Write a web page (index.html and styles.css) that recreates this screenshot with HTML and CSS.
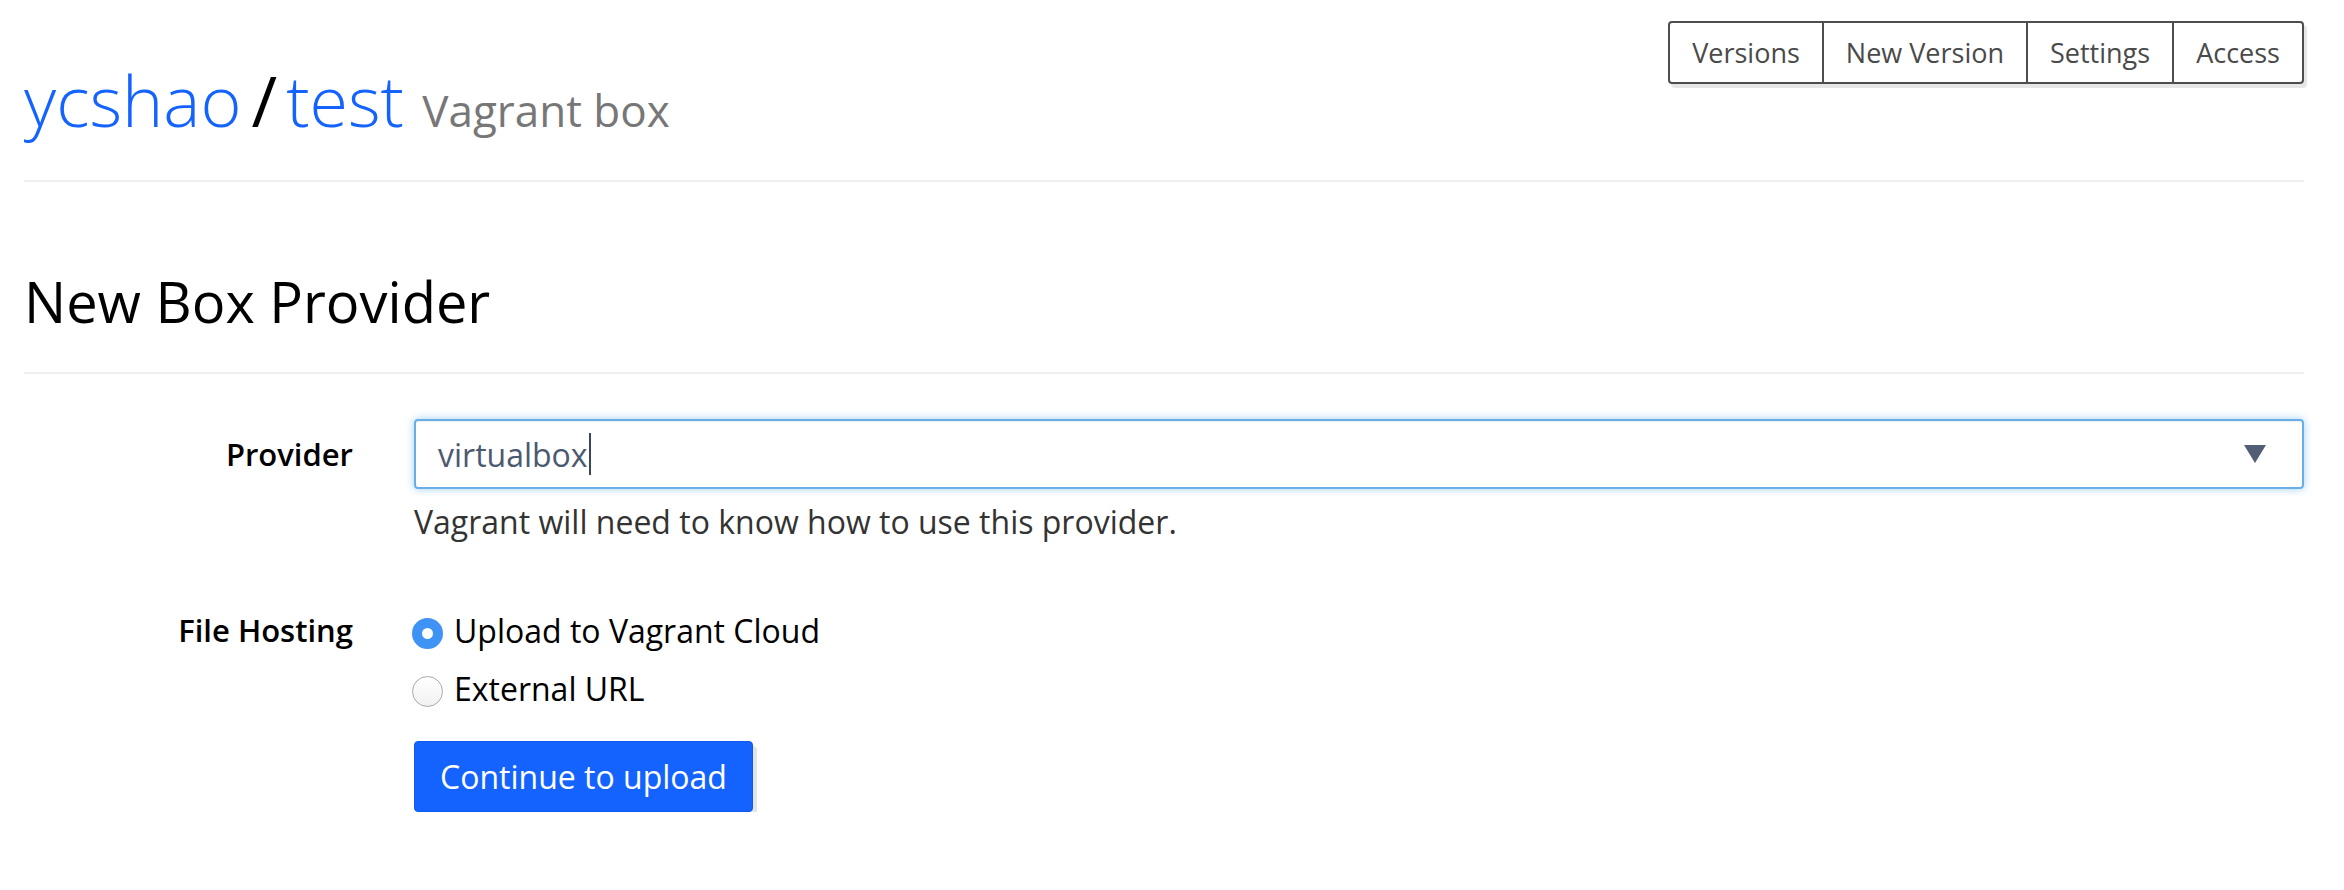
FILE: index.html
```html
<!DOCTYPE html>
<html lang="en">
<head>
<meta charset="utf-8">
<title>ycshao/test - New Box Provider</title>
<link rel="stylesheet" href="styles.css">
</head>
<body>
<div class="page">
  <header class="header">
    <h1 class="title"><a class="link" href="#">ycshao</a><span class="slash">/</span><a class="link" href="#">test</a> <small class="subtitle">Vagrant box</small></h1>
    <nav class="btn-group">
      <a class="nav-btn" href="#">Versions</a>
      <a class="nav-btn" href="#">New Version</a>
      <a class="nav-btn" href="#">Settings</a>
      <a class="nav-btn" href="#">Access</a>
    </nav>
  </header>

  <h2 class="section-title">New Box Provider</h2>

  <form class="form">
    <div class="form-row">
      <label class="form-label label-provider">Provider</label>
      <div class="form-field">
        <div class="select">
          <span class="select-value">virtualbox</span><span class="caret"></span>
          <svg class="select-arrow" width="22" height="18" viewBox="0 0 22 18"><polygon points="0,0 22,0 11,18" fill="#525e73"/></svg>
        </div>
        <p class="help">Vagrant will need to know how to use this provider.</p>
      </div>
    </div>
    <div class="form-row row-hosting">
      <label class="form-label label-hosting">File Hosting</label>
      <div class="form-field">
        <div class="radio"><span class="radio-dot checked"></span><span class="radio-text">Upload to Vagrant Cloud</span></div>
        <div class="radio"><span class="radio-dot"></span><span class="radio-text">External URL</span></div>
        <button class="btn-primary" type="button">Continue to upload</button>
      </div>
    </div>
  </form>
</div>
</body>
</html>
```
FILE: styles.css
```css
html, body {
  margin: 0;
  padding: 0;
  background: #fff;
}
body {
  font-family: "Open Sans", "Noto Sans", sans-serif;
  color: #000;
}
.page {
  padding: 0 40px 0 24px;
}
.header {
  display: flex;
  justify-content: space-between;
  align-items: flex-start;
  height: 180px;
  border-bottom: 2px solid #eeeeee;
}
.title {
  margin: 0;
  padding-top: 65px;
  font-size: 70px;
  font-weight: 300;
  line-height: 1;
  white-space: nowrap;
}
.link {
  color: #1563ff;
  text-decoration: none;
}
.slash {
  color: #000;
  font-weight: 400;
  margin: 0 9px 0 10px;
}
.subtitle {
  font-size: 44px;
  color: #777;
  font-weight: 400;
}
.btn-group {
  display: flex;
  margin-top: 21px;
}
.nav-btn {
  display: block;
  font-size: 27px;
  line-height: 59px;
  padding: 0 22px;
  color: #4a4a4a;
  text-decoration: none;
  border: 2px solid #4d4d4d;
  margin-left: -2px;
  background: #fff;
  box-shadow: 3px 4px 0 #e6e6e6;
}
.nav-btn:first-child {
  border-radius: 4px 0 0 4px;
  margin-left: 0;
}
.nav-btn:last-child {
  border-radius: 0 4px 4px 0;
}
.section-title {
  margin: 91px 0 0;
  padding-bottom: 43px;
  font-size: 56px;
  font-weight: 400;
  line-height: 1;
  border-bottom: 2px solid #eeeeee;
}
.form {
  margin-top: 45px;
}
.form-row {
  display: grid;
  grid-template-columns: 390px 1fr;
}
.form-label {
  text-align: right;
  padding-right: 61px;
  font-size: 31px;
  font-weight: 600;
}
.label-provider {
  line-height: 70px;
}
.label-hosting {
  line-height: 58px;
}
.row-hosting {
  margin-top: 55px;
}
.select {
  position: relative;
  box-sizing: border-box;
  height: 70px;
  border: 2px solid #66afe9;
  border-radius: 4px;
  box-shadow: inset 0 1px 1px rgba(0,0,0,0.075), 0 0 8px rgba(102,175,233,0.6);
  padding-left: 22px;
  display: flex;
  align-items: center;
  font-size: 32px;
  color: #4c5a70;
}
.caret {
  display: inline-block;
  width: 2px;
  height: 42px;
  background: #3b4658;
  margin-left: 1px;
}
.select-arrow {
  position: absolute;
  right: 36px;
  top: 24px;
}
.help {
  margin: 9px 0 0;
  font-size: 32px;
  line-height: 48px;
  color: #333;
}
.radio {
  display: flex;
  align-items: center;
  height: 58px;
  font-size: 32px;
  margin-left: -2px;
}
.radio-dot {
  box-sizing: border-box;
  width: 31px;
  height: 31px;
  border-radius: 50%;
  border: 1px solid #a9a9a9;
  background: linear-gradient(#ffffff, #f1f1f1);
  margin: 6px 11px 0 0;
  flex: none;
}
.radio-dot.checked {
  border: 10px solid #3f93f5;
  background: #fff;
}
.btn-primary {
  display: block;
  margin-top: 24px;
  font-family: "Open Sans", "Noto Sans", sans-serif;
  font-size: 32px;
  line-height: 45px;
  padding: 12px 25px;
  color: #fff;
  background: #1563ff;
  border: 1px solid #0f5af0;
  border-radius: 4px;
  box-shadow: 4px 5px 0 #e4e4e4;
  cursor: pointer;
}
```
